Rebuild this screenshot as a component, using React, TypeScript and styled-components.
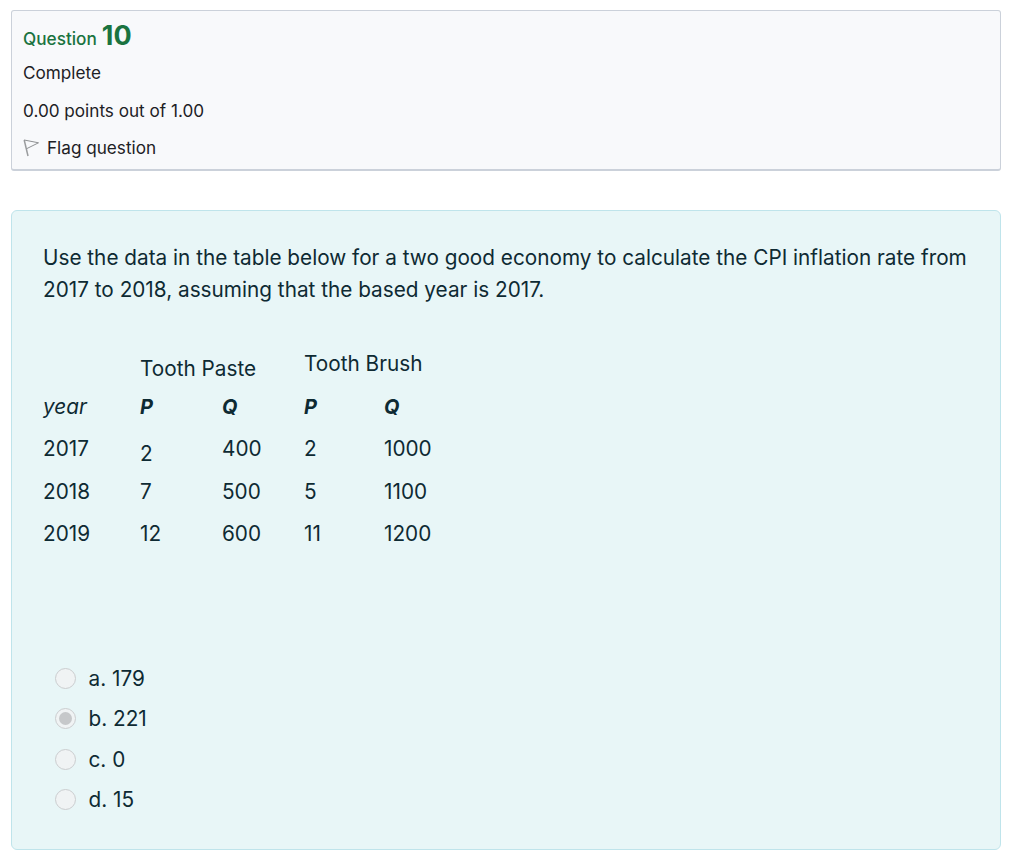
import React from 'react';
import styled, { createGlobalStyle } from 'styled-components';

const GlobalStyle = createGlobalStyle`
  html, body {
    margin: 0;
    padding: 0;
    background: #fff;
    font-family: Inter, "Liberation Sans", sans-serif;
    color: #1d2125;
  }
`;

const Page = styled.main`
  display: flex;
  flex-direction: column;
  gap: 39px;
  width: 990px;
  padding: 10px 0 0 11px;
`;

const InfoCard = styled.section`
  box-sizing: border-box;
  height: 161px;
  padding: 9px 11px 0;
  background: #f8f9fb;
  border: 1.5px solid #cbd1da;
  border-bottom-width: 2px;
  border-radius: 3px;
`;

const QuestionTitle = styled.h3`
  display: flex;
  align-items: baseline;
  gap: 5px;
  margin: 0;
  height: 34px;
  font-size: 17.2px;
  font-weight: 500;
  line-height: 31px;
  color: #1a7340;
`;

const QuestionNumber = styled.span`
  font-size: 27px;
  font-weight: 700;
`;

const InfoLine = styled.div`
  display: flex;
  align-items: center;
  gap: 7px;
  height: 37.5px;
  font-size: 17.15px;
  color: #1d2125;
`;

const FlagIcon = styled.svg`
  width: 17px;
  height: 18px;
  flex: none;
`;

const ContentCard = styled.section`
  box-sizing: border-box;
  height: 640px;
  padding: 30.6px 31px 0;
  background: #e8f6f7;
  border: 1.5px solid #bfe4eb;
  border-radius: 6px;
  color: #0e2a33;
  font-size: 20.75px;
`;

const Prompt = styled.p`
  margin: 0;
  line-height: 32px;
`;

const DataTable = styled.table`
  border-collapse: collapse;
  margin-top: 37.6px;
  table-layout: fixed;
  width: 401px;
`;

const Cell = styled.td<{ $shift?: boolean }>`
  height: 42.4px;
  padding: ${(p) => (p.$shift ? '10px 0 0' : '0')};
  line-height: 24px;
  white-space: nowrap;
  box-sizing: border-box;
`;

const Heading = styled(Cell)`
  font-style: italic;
  font-weight: 700;
  font-size: 20px;
`;

const YearLabel = styled.em`
  font-weight: 400;
  font-size: 20.75px;
`;

const Choices = styled.div`
  display: flex;
  flex-direction: column;
  margin-top: 103px;
  padding-left: 11.5px;
`;

const Choice = styled.label`
  display: flex;
  align-items: center;
  gap: 13px;
  height: 40.5px;
`;

const Radio = styled.span<{ $checked?: boolean }>`
  box-sizing: border-box;
  display: flex;
  align-items: center;
  justify-content: center;
  width: 21px;
  height: 21px;
  border: 1.5px solid #cbcdcf;
  border-radius: 50%;
  background: #f0f3f4;

  &::after {
    content: '';
    display: ${(p) => (p.$checked ? 'block' : 'none')};
    width: 13px;
    height: 13px;
    border-radius: 50%;
    background: #c6c8ca;
  }
`;

const columns = [97, 82, 82, 80, 60];

const rows = [
  { year: '2017', values: ['2', '400', '2', '1000'] },
  { year: '2018', values: ['7', '500', '5', '1100'] },
  { year: '2019', values: ['12', '600', '11', '1200'] },
];

const choices = ['a. 179', 'b. 221', 'c. 0', 'd. 15'];

export default function App() {
  return (
    <Page>
      <GlobalStyle />
      <InfoCard>
        <QuestionTitle>
          Question <QuestionNumber>10</QuestionNumber>
        </QuestionTitle>
        <InfoLine>Complete</InfoLine>
        <InfoLine>0.00 points out of 1.00</InfoLine>
        <InfoLine>
          <FlagIcon viewBox="0 0 17 18" fill="none">
            <path d="M1.2 1 L5 17" stroke="#9a9c9e" strokeWidth="1.5" />
            <path d="M1.2 1 L15.5 3.8 L3.4 9.8" stroke="#8f9193" strokeWidth="1" />
          </FlagIcon>
          Flag question
        </InfoLine>
      </InfoCard>
      <ContentCard>
        <Prompt>
          Use the data in the table below for a two good economy to calculate the CPI inflation rate from
          2017 to 2018, assuming that the based year is 2017.
        </Prompt>
        <DataTable>
          <colgroup>
            {columns.map((width, i) => (
              <col key={i} width={width} />
            ))}
          </colgroup>
          <tbody>
            <tr>
              <Cell />
              <Cell colSpan={2} $shift>Tooth Paste</Cell>
              <Cell colSpan={2}>Tooth Brush</Cell>
            </tr>
            <tr>
              <Heading><YearLabel>year</YearLabel></Heading>
              <Heading>P</Heading>
              <Heading>Q</Heading>
              <Heading>P</Heading>
              <Heading>Q</Heading>
            </tr>
            {rows.map((row) => (
              <tr key={row.year}>
                <Cell>{row.year}</Cell>
                {row.values.map((value, i) => (
                  <Cell key={i} $shift={row.year === '2017' && i === 0}>
                    {value}
                  </Cell>
                ))}
              </tr>
            ))}
          </tbody>
        </DataTable>
        <Choices>
          {choices.map((choice, i) => (
            <Choice key={choice}>
              <Radio $checked={i === 1} />
              {choice}
            </Choice>
          ))}
        </Choices>
      </ContentCard>
    </Page>
  );
}
